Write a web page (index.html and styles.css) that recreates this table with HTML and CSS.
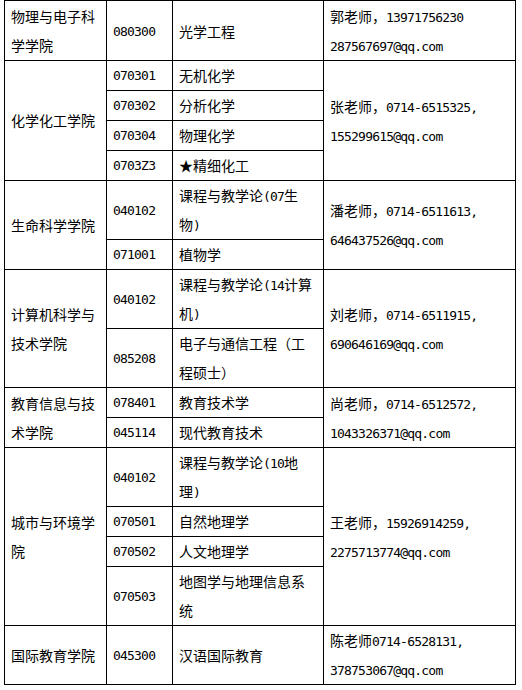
FILE: index.html
```html
<!DOCTYPE html>
<html lang="zh-CN">
<head>
<meta charset="utf-8">
<title>招生专业联系方式</title>
<link rel="stylesheet" href="styles.css">
</head>
<body>
<table class="majors">
  <colgroup>
    <col class="c-college">
    <col class="c-code">
    <col class="c-major">
    <col class="c-contact">
  </colgroup>
  <tbody>
    <tr class="first">
      <td class="college">物理与电子科<br>学学院</td>
      <td class="code">080300</td>
      <td class="major">光学工程</td>
      <td class="contact">郭老师，<span class="en">13971756230</span><br><span class="en">287567697@qq.com</span></td>
    </tr>
    <tr>
      <td class="college" rowspan="4">化学化工学院</td>
      <td class="code">070301</td>
      <td class="major">无机化学</td>
      <td class="contact" rowspan="4">张老师，<span class="en">0714-6515325,</span><br><span class="en">155299615@qq.com</span></td>
    </tr>
    <tr>
      <td class="code">070302</td>
      <td class="major">分析化学</td>
    </tr>
    <tr>
      <td class="code">070304</td>
      <td class="major">物理化学</td>
    </tr>
    <tr>
      <td class="code">0703Z3</td>
      <td class="major">★精细化工</td>
    </tr>
    <tr>
      <td class="college" rowspan="2">生命科学学院</td>
      <td class="code">040102</td>
      <td class="major">课程与教学论<span class="en">(07</span>生<br>物<span class="en">)</span></td>
      <td class="contact" rowspan="2">潘老师，<span class="en">0714-6511613,</span><br><span class="en">646437526@qq.com</span></td>
    </tr>
    <tr>
      <td class="code">071001</td>
      <td class="major">植物学</td>
    </tr>
    <tr>
      <td class="college" rowspan="2">计算机科学与<br>技术学院</td>
      <td class="code">040102</td>
      <td class="major">课程与教学论<span class="en">(14</span>计算<br>机<span class="en">)</span></td>
      <td class="contact" rowspan="2">刘老师，<span class="en">0714-6511915,</span><br><span class="en">690646169@qq.com</span></td>
    </tr>
    <tr>
      <td class="code">085208</td>
      <td class="major">电子与通信工程（工<br>程硕士）</td>
    </tr>
    <tr>
      <td class="college" rowspan="2">教育信息与技<br>术学院</td>
      <td class="code">078401</td>
      <td class="major">教育技术学</td>
      <td class="contact" rowspan="2">尚老师，<span class="en">0714-6512572,</span><br><span class="en">1043326371@qq.com</span></td>
    </tr>
    <tr>
      <td class="code">045114</td>
      <td class="major">现代教育技术</td>
    </tr>
    <tr>
      <td class="college" rowspan="4">城市与环境学<br>院</td>
      <td class="code">040102</td>
      <td class="major">课程与教学论<span class="en">(10</span>地<br>理<span class="en">)</span></td>
      <td class="contact" rowspan="4">王老师，<span class="en">15926914259,</span><br><span class="en">2275713774@qq.com</span></td>
    </tr>
    <tr>
      <td class="code">070501</td>
      <td class="major">自然地理学</td>
    </tr>
    <tr>
      <td class="code">070502</td>
      <td class="major">人文地理学</td>
    </tr>
    <tr>
      <td class="code">070503</td>
      <td class="major">地图学与地理信息系<br>统</td>
    </tr>
    <tr>
      <td class="college">国际教育学院</td>
      <td class="code">045300</td>
      <td class="major">汉语国际教育</td>
      <td class="contact">陈老师<span class="en">0714-6528131,</span><br><span class="en">378753067@qq.com</span></td>
    </tr>
  </tbody>
</table>
</body>
</html>
```

FILE: styles.css
```css
html, body {
  margin: 0;
  padding: 0;
  background: #ffffff;
}

body {
  font-family: "Noto Sans CJK SC", "Noto Sans", sans-serif;
  font-size: 14px;
  color: #000000;
}

.majors {
  border-collapse: collapse;
  table-layout: fixed;
  width: 511px;
  margin-left: 4px;
}

.c-college { width: 102px; }
.c-code { width: 66px; }
.c-major { width: 151px; }
.c-contact { width: 192px; }

.majors td {
  border: 1px solid #000000;
  padding: 0 5px 0 6px;
  line-height: 29px;
  vertical-align: middle;
  white-space: nowrap;
  overflow: hidden;
}

.majors .first td {
  padding-top: 1px;
}

.majors td.code,
.en {
  font-family: "DejaVu Sans Mono", "Liberation Mono", monospace;
  font-size: 13px;
  letter-spacing: -0.8px;
}

.en {
  line-height: 1;
}
```
